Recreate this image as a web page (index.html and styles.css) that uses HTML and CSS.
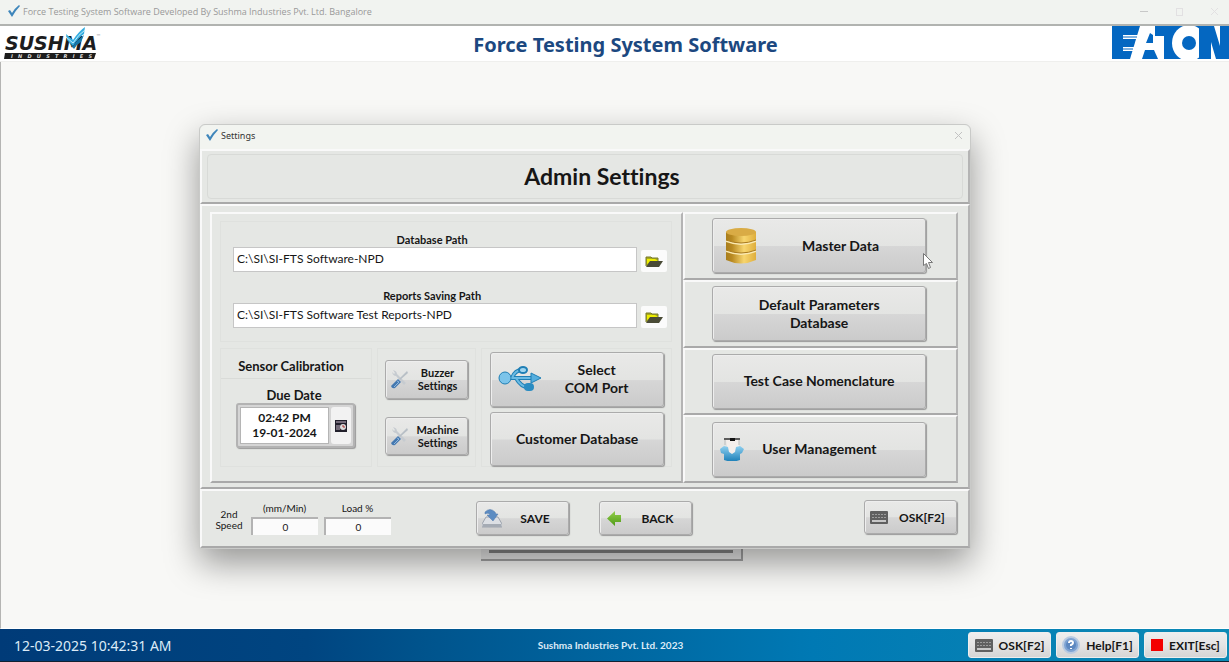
FILE: index.html
```html
<!DOCTYPE html>
<html lang="en">
<head>
<meta charset="utf-8">
<title>Force Testing System Software</title>
<link rel="stylesheet" href="styles.css">
</head>
<body>
<svg class="defs" aria-hidden="true">
  <defs>
    <linearGradient id="gold"><stop offset="0" stop-color="#a87d1c"/><stop offset=".2" stop-color="#b98a22"/><stop offset=".6" stop-color="#f7d56e"/><stop offset="1" stop-color="#dfae3c"/></linearGradient>
    <linearGradient id="aqua" x2="0" y2="1"><stop offset="0" stop-color="#8fd0f0"/><stop offset="1" stop-color="#1b7fb8"/></linearGradient>
    <linearGradient id="leaf" x2="0" y2="1"><stop offset="0" stop-color="#93cf4c"/><stop offset="1" stop-color="#4f9a16"/></linearGradient>
    <symbol id="tick" viewBox="0 0 13 12"><path d="M1 6l2-1 2 3Q8 3 12 0l1 1Q9 5 5 12z" fill="#3f86bb"/></symbol>
    <symbol id="folder" viewBox="0 0 18 13"><path d="M1 11V2h5l1 1h6v3" fill="#a9ab1c" stroke="#77782c"/><path d="M2 4l8 0 3 2-7 0-4 3z" fill="#eeee00"/><path d="M1 12l4-6h13l-4 6z" fill="#4a4b36"/></symbol>
    <symbol id="tools" viewBox="0 0 18 20"><path d="M2 3q1 4 4 4l8 9 2-2-9-9Q7 2 3 1l2 3-1 1z" fill="#c6cbd0"/><path d="M17 2l-8 8 1 1 8-7z" fill="#b8bfc6"/><path d="M8 10l3 3-6 6q-3 1-4-2z" fill="#4478b0"/><path d="M7 12l2 1-5 5" fill="none" stroke="#93b8dc"/></symbol>
    <symbol id="keyboard" viewBox="0 0 18 13"><rect x="0" y="0" width="18" height="13" rx="1" fill="#606060"/><path d="M2 3.500h14M2 6.500h14" stroke="#9c9c9c" stroke-dasharray="2 1"/><path d="M2 10h14" stroke="#c8c8c8" stroke-width="2"/></symbol>
  </defs>
</svg>

<header class="window-bar">
  <svg class="tick" aria-hidden="true"><use href="#tick"/></svg>
  <span class="window-title">Force Testing System Software Developed By Sushma Industries Pvt. Ltd. Bangalore</span>
  <span class="window-controls">
    <button aria-label="Minimize"><svg viewBox="0 0 9 9"><path d="M0 4.500h8" stroke="#c8c8c8"/></svg></button>
    <button aria-label="Maximize"><svg viewBox="0 0 9 9"><rect x="1.500" y="1.500" width="6" height="7" fill="none" stroke="#e2e0e2"/></svg></button>
    <button aria-label="Close"><svg viewBox="0 0 9 9"><path d="M1 1l7 7M8 1l-7 7" stroke="#e2e0e2"/></svg></button>
  </span>
</header>

<div class="brand">
  <svg class="logo-sushma" viewBox="0 0 98 34" role="img" aria-label="Sushma Industries">
    <text x="1" y="24" class="sushma-word">SUSHMA</text>
    <path d="M62 8l7 6Q75 5 81 1l-1 7Q74 12 69 20l-6-6z" fill="#35aee0"/>
    <path d="M63 14l6 6Q74 13 80 9l-3 7q-4 2-7 7z" fill="#1577a8"/>
    <path d="M62 11l7 6Q75 8 81 4" fill="none" stroke="#c6ebfa"/>
    <text x="92" y="12" class="sushma-mark">™</text>
    <path d="M1 27h91l-2 6H0z" fill="#1d1d1d"/>
    <text x="7" y="32" class="sushma-sub">I   N   D   U   S   T   R   I   E   S</text>
  </svg>
  <h1 class="product">Force Testing System Software</h1>
  <svg class="logo-eaton" viewBox="0 0 117 33" role="img" aria-label="Eaton">
    <path d="M0 0h28L18 33H0z" fill="#0467c1"/>
    <path d="M11 9h16v4H11zM11 21h12v4H11z" fill="#fff"/>
    <path d="M11 11h14M11 23h10" stroke="#0467c1"/>
    <path d="M38 7l-4 10h7V9z" fill="#0467c1"/>
    <path d="M33 24h9l4 9H30z" fill="#0467c1"/>
    <path d="M43 0h44v33H52V10h-9z" fill="#0467c1"/>
    <ellipse cx="77" cy="17" rx="17" ry="18" fill="#fff"/>
    <circle cx="77" cy="17" r="7" fill="#0467c1"/>
    <path d="M87 0h30v33H87z" fill="#0467c1"/>
    <path d="M102 0h6v20zM99 16l5 17h-5z" fill="#fff"/>
  </svg>
</div>

<main class="desktop">
  <div class="backdrop-panel"></div>
  <section class="dialog" role="dialog" aria-label="Settings">
    <div class="dialog-bar">
      <svg class="tick" aria-hidden="true"><use href="#tick"/></svg>
      <span>Settings</span>
      <button class="dialog-close" aria-label="Close"><svg viewBox="0 0 9 9"><path d="M1 1l7 7M8 1l-7 7" stroke="#c2c2c2"/></svg></button>
    </div>

    <div class="raised heading-pane"><h2 class="heading">Admin Settings</h2></div>

    <div class="raised body-pane">
      <div class="raised left-pane">
        <div class="group paths">
          <label class="path-label" for="db">Database Path</label>
          <div class="path-row">
            <input id="db" class="path-input" value="C:\SI\SI-FTS Software-NPD">
            <button class="browse" aria-label="Browse database path"><svg><use href="#folder"/></svg></button>
          </div>
          <label class="path-label" for="rep">Reports Saving Path</label>
          <div class="path-row">
            <input id="rep" class="path-input" value="C:\SI\SI-FTS Software Test Reports-NPD">
            <button class="browse" aria-label="Browse reports path"><svg><use href="#folder"/></svg></button>
          </div>
        </div>
        <div class="lower">
          <div class="group sensor">
            <h3 class="sensor-title">Sensor Calibration</h3>
            <label class="due-label" for="due">Due Date</label>
            <div class="due">
              <textarea id="due" class="due-text" rows="2">02:42 PM
19-01-2024</textarea>
              <button class="due-pick" aria-label="Pick date"><svg viewBox="0 0 12 12"><path d="M0 0h12v12H0z" fill="#22202c"/><path d="M1 2h10M2 5v5M4 5v5" stroke="#c9b8c9"/><circle cx="8" cy="7" r="3" fill="#ddd"/><path d="M8 5v2h2" fill="none" stroke="#a33"/></svg></button>
            </div>
          </div>
          <div class="group machine">
            <button class="btn btn-small"><svg class="ico-tools" aria-hidden="true"><use href="#tools"/></svg><span>Buzzer<br>Settings</span></button>
            <button class="btn btn-small"><svg class="ico-tools" aria-hidden="true"><use href="#tools"/></svg><span>Machine<br>Settings</span></button>
          </div>
          <div class="group com">
            <button class="btn btn-large">
              <svg class="ico-usb" viewBox="0 0 44 26" aria-hidden="true"><g fill="none" stroke="#1f7fb5" stroke-width="4"><path d="M8 12h28"/><path d="M14 12Q17 4 24 4M18 12q5 9 12 9"/></g><g fill="none" stroke="#6bbbe4" stroke-width="2"><path d="M8 12h28"/><path d="M14 12Q17 4 24 4M18 12q5 9 12 9"/></g><circle cx="7" cy="12" r="6" fill="#7cc4ea" stroke="#1f7fb5"/><ellipse cx="25" cy="4" rx="4" ry="3" fill="#9fd5f0" stroke="#1f7fb5" stroke-width="2"/><path d="M33 7l10 5-10 5z" fill="#55aede" stroke="#1f7fb5"/><rect x="26" y="17" width="10" height="8" rx="4" fill="#2a8cc2"/></svg>
              <span class="fill">Select<br>COM Port</span>
            </button>
            <button class="btn btn-large">Customer Database</button>
          </div>
        </div>
      </div>

      <div class="right-pane">
        <div class="raised cell">
          <button class="btn btn-large">
            <svg class="ico-db" viewBox="0 0 30 36" aria-hidden="true"><path d="M0 4v28q15 7 30 0V4z" fill="url(#gold)"/><ellipse cx="15" cy="4" rx="15" ry="4" fill="#d9ab45"/><path d="M0 13q15 6 30 0M0 23q15 6 30 0" fill="none" stroke="#fbe9b0" stroke-width="2"/><path d="M0 12q15 6 30 0M0 22q15 6 30 0" fill="none" stroke="#a87a1d"/></svg>
            <span class="fill">Master Data</span>
          </button>
        </div>
        <div class="raised cell"><button class="btn btn-large">Default Parameters<br>Database</button></div>
        <div class="raised cell"><button class="btn btn-large">Test Case Nomenclature</button></div>
        <div class="raised cell">
          <button class="btn btn-large">
            <svg class="ico-user" viewBox="0 0 24 24" aria-hidden="true"><path d="M6 3h13v7l-3 6-4 2-4-4z" fill="#f4efec"/><path d="M4 1h16v2H4z" fill="#5c5c5c"/><path d="M10 1h5v3h-5z" fill="#111"/><path d="M5 3v5M19 3v5" stroke="#bbb"/><path d="M0 12l4-3 4 1 1 5 3 2 3-2 1-5 4-1 4 3-2 4-2 1v6q-8 3-16 0v-6l-3-1z" fill="url(#aqua)"/></svg>
            <span>User Management</span>
          </button>
        </div>
      </div>
    </div>

    <div class="raised footer-pane">
      <div class="speed">
        <span class="speed-name">2nd<br>Speed</span>
        <label class="speed-field">(mm/Min)<input value="0"></label>
        <label class="speed-field">Load %<input value="0"></label>
      </div>
      <div class="actions">
        <button class="btn btn-action"><svg class="ico-save" viewBox="0 0 20 19" aria-hidden="true"><path d="M4 8h12l4 7v3H0v-3z" fill="#dcdfe4" stroke="#9da3ad"/><path d="M1 15h18v3H1z" fill="#a5abb4"/><path d="M3 3q5-5 10 0l1 2h2l-5 7-6-6h3Q7 3 3 5z" fill="#5c8cc2" stroke="#5079aa" stroke-width=".5"/></svg><span>SAVE</span></button>
        <button class="btn btn-action"><svg class="ico-back" viewBox="0 0 15 15" aria-hidden="true"><path d="M0 7.500L8 0v4h6v7H8v4z" fill="url(#leaf)"/></svg><span>BACK</span></button>
      </div>
      <button class="btn btn-osk"><svg class="ico-key" aria-hidden="true"><use href="#keyboard"/></svg><span>OSK[F2]</span></button>
    </div>
  </section>

  <svg class="pointer" viewBox="0 0 10 16" aria-hidden="true"><path d="M.5 .5v12l3-2 2 5 2-1-2-5h4z" fill="#fff" stroke="#777"/></svg>
</main>

<footer class="status">
  <time class="clock">12-03-2025 10:42:31 AM</time>
  <span class="copyright">Sushma Industries Pvt. Ltd. 2023</span>
  <div class="status-buttons">
    <button class="btn btn-status"><svg class="ico-key" aria-hidden="true"><use href="#keyboard"/></svg><span>OSK[F2]</span></button>
    <button class="btn btn-status"><svg class="ico-help" viewBox="0 0 18 18" aria-hidden="true"><circle cx="9" cy="9" r="8" fill="#7ea3d3" stroke="#b9cbe2" stroke-width="2"/><circle cx="9" cy="9" r="5" fill="#5d88c0"/><path d="M7 7q0-2 2-2t2 2q0 1-2 2v1M9 12v1" fill="none" stroke="#fff" stroke-width="2"/></svg><span>Help[F1]</span></button>
    <button class="btn btn-status"><svg class="ico-exit" viewBox="0 0 12 12" aria-hidden="true"><path d="M0 0h12v12H0z" fill="#f40000"/></svg><span>EXIT[Esc]</span></button>
  </div>
</footer>
</body>
</html>
```
FILE: styles.css
```css
* { box-sizing: border-box; }

body {
  margin: 0;
  height: 100vh;
  display: flex;
  flex-direction: column;
  background: #f8f8f6;
  color: #161616;
  font-family: Lato, "Noto Sans", sans-serif;
  font-size: 12px;
  font-variant-ligatures: none;
}

h1, h2, h3 { margin: 0; }
button, input, textarea { font: inherit; color: inherit; }
button { padding: 0; border: 0; background: none; }
svg { display: block; flex: none; }
.defs { position: absolute; width: 0; height: 0; }

/* Main window */
.window-bar {
  display: flex;
  align-items: center;
  height: 26px;
  padding: 0 10px 2px 7px;
  border-bottom: 2px solid #b1b3b0;
  background: #f1f3f0;
  color: #999;
}
.tick { width: 13px; height: 12px; margin-right: 3px; }
.window-title { font-family: "Open Sans", "Noto Sans", sans-serif; font-size: 9px; }
.window-controls { display: flex; gap: 26px; margin-left: auto; }
.window-controls svg, .dialog-close svg { width: 9px; height: 9px; }

.brand {
  display: grid;
  grid-template-columns: 1fr auto 1fr;
  align-items: start;
  height: 36px;
  background: #fff;
  border-bottom: 1px solid #efefed;
}
.logo-sushma { width: 98px; height: 34px; margin-left: 4px; }
.sushma-word { font: italic bold 19px "DejaVu Sans", sans-serif; fill: #1d1d1d; }
.sushma-mark { font: 5px "DejaVu Sans", sans-serif; fill: #888; }
.sushma-sub { font: italic bold 5px "DejaVu Sans", sans-serif; fill: #ddd; white-space: pre; }
.logo-eaton { width: 117px; height: 33px; justify-self: end; }
.product {
  padding-left: 22px;
  color: #1c4880;
  font-family: "Noto Sans", "Open Sans", sans-serif;
  font-size: 20px;
  line-height: 38px;
}

.desktop {
  position: relative;
  flex: 1;
  border-left: 1px solid #b5b5b3;
  border-bottom: 1px solid #fff;
}

.backdrop-panel {
  position: absolute;
  top: 480px;
  left: 480px;
  width: 262px;
  height: 19px;
  border: solid #a5a5a5;
  border-width: 0 2px 2px 0;
  background: linear-gradient(#888, #888) 8px 8px / 244px 3px no-repeat, #ececec;
}

/* Settings dialog */
.dialog {
  position: absolute;
  top: 62px;
  left: 198px;
  right: 258px;
  border: 1px solid #c9cac8;
  border-radius: 6px 6px 2px 2px;
  background: #e5e7e4;
  box-shadow: 0 14px 34px rgba(0, 0, 0, .4);
}
.dialog-bar {
  display: flex;
  align-items: center;
  height: 24px;
  padding: 0 7px 4px 5px;
  border-radius: 6px 6px 0 0;
  background: #f2f4f0;
  font-family: "Noto Sans", "Open Sans", sans-serif;
  font-size: 9px;
  color: #333;
}
.dialog-close { margin-left: auto; }

.raised {
  border: solid;
  border-width: 2px;
  border-color: #f9f9f9 #b4b4b4 #a9a9a9 #f9f9f9;
}

.heading-pane { height: 55px; padding: 3px 5px; }
.heading {
  padding-left: 34px;
  border: 1px solid #d8dad7;
  border-radius: 4px;
  font-size: 23px;
  line-height: 43px;
  text-align: center;
}

.body-pane {
  display: grid;
  grid-template-columns: 472fr 274fr;
  padding: 6px 10px 4px 8px;
}
.left-pane { padding: 7px 9px 14px 8px; }
.group { border: 1px solid #dfe1de; }

.paths { height: 121px; padding: 11px 4px 0 12px; }
.path-label {
  display: block;
  margin-right: 36px;
  height: 14px;
  font-size: 11px;
  font-weight: 700;
  line-height: 14px;
  text-align: center;
}
.path-row { display: flex; align-items: flex-end; gap: 4px; margin-bottom: 17px; }
.path-input {
  flex: 1;
  min-width: 0;
  height: 25px;
  padding: 0 3px 3px;
  border: 1px solid #c6c6c6;
  background: #fff;
  font-size: 12px;
}
.browse {
  display: grid;
  place-items: center;
  width: 26px;
  height: 22px;
  border-radius: 2px;
  background: #fbfbfb;
}
.browse svg { width: 18px; height: 13px; }

.lower { display: flex; gap: 5px; margin-top: 6px; height: 119px; }
.sensor { width: 152px; text-align: center; font-weight: 700; }
.sensor-title {
  height: 30px;
  padding-right: 10px;
  border-bottom: 1px solid #d9dbd8;
  font-size: 13px;
  line-height: 34px;
}
.due-label { display: block; padding-right: 4px; line-height: 16px; margin-top: 8px; font-size: 13px; }
.due {
  display: flex;
  width: 119px;
  height: 45px;
  margin-left: 15px;
  padding: 2px;
  border: 2px solid #b3b3b3;
  border-radius: 3px;
  background: #d5d5d5;
  box-shadow: 1px 1px 1px #999;
}
.due-text {
  flex: 1;
  min-width: 0;
  padding: 2px 0;
  border: 1px solid #b5b5b5;
  background: #fff;
  font-size: 12px;
  line-height: 15px;
  text-align: center;
  resize: none;
  overflow: hidden;
}
.due-pick { display: grid; place-items: center; width: 20px; margin-left: 2px; border-radius: 3px; background: #f2f2f2; }
.due-pick svg { width: 12px; height: 12px; }

.machine { display: flex; flex-direction: column; gap: 18px; width: 99px; padding: 11px 7px; }
.com { display: flex; flex-direction: column; gap: 5px; flex: 1; padding: 3px 7px 0 8px; }

.btn {
  display: flex;
  align-items: center;
  justify-content: center;
  border: 1px solid #ababab;
  border-radius: 3px;
  background: linear-gradient(#e9e9e8, #e3e4e2 50%, #d6d6d6 52%, #cbcbcb);
  box-shadow: inset 1px 1px 0 #eee, 1px 1px 1px #999;
  font-weight: 700;
}
.btn-large { width: 100%; height: 55px; font-size: 14px; line-height: 18px; }
.btn-small { justify-content: flex-start; width: 83px; height: 40px; padding-left: 4px; font-size: 11px; line-height: 13px; }
.btn-small span, .btn-action span, .fill { flex: 1; text-align: center; }
.ico-tools { width: 18px; height: 20px; }
.ico-usb { width: 44px; height: 26px; }
.ico-db { width: 30px; height: 36px; }
.ico-user { width: 24px; height: 24px; margin-right: 18px; }
.btn-large:has(svg) { justify-content: flex-start; padding-left: 7px; }
.btn-large:has(.ico-db) { padding-left: 13px; }
.btn-large:has(.ico-usb) { padding-right: 12px; }

.right-pane { display: grid; grid-template-rows: repeat(4, 1fr); }
.cell { display: grid; align-items: center; padding: 0 30px 0 27px; }

.footer-pane { display: flex; justify-content: space-between; height: 59px; padding: 9px 11px 0 12px; }
.speed { display: flex; width: 262px; gap: 6px; font-size: 10px; }
.speed-name { margin: 9px 1px 0 0; line-height: 11px; text-align: center; width: 30px; }
.speed-field { text-align: center; line-height: 17px; }
.speed-field input {
  display: block;
  width: 67px;
  height: 18px;
  border: solid #b3b3b3;
  border-width: 2px 0 0 2px;
  background: #fbfbfb;
  text-align: center;
}
.actions { display: flex; flex: 1; gap: 30px; }
.btn-action, .btn-osk { width: 93px; height: 34px; font-size: 12px; justify-content: flex-start; padding-left: 5px; }
.actions .btn { margin-top: 1px; }
.ico-save { width: 20px; height: 19px; }
.ico-back { width: 15px; height: 15px; margin: 0 2px; }
.ico-key { width: 18px; height: 13px; }
.btn-osk { gap: 11px; }

.pointer { position: absolute; top: 191px; left: 922px; width: 10px; height: 16px; }

/* Status bar */
.status {
  display: grid;
  grid-template-columns: 1fr auto 1fr;
  align-items: center;
  height: 33px;
  padding: 0 2px 0 14px;
  border-bottom: 1px solid #123;
  background: linear-gradient(90deg, #003b78, #004581 25%, #00538c 34%, #0079b4 66%, #0d8ab5);
  color: #dcebf7;
}
.clock { font-family: "Noto Sans", "Open Sans", sans-serif; font-size: 14px; }
.copyright { padding-right: 20px; font-size: 10px; font-weight: 700; }
.status-buttons { display: flex; justify-content: flex-end; gap: 5px; }
.btn-status { gap: 6px; width: 83px; height: 26px; border-color: #eee; box-shadow: none; color: #161616; font-size: 12px; background: linear-gradient(#eee, #e4e4e4 50%, #d5d5d5); }
.ico-help { width: 18px; height: 18px; }
.ico-exit { width: 12px; height: 12px; }
```
